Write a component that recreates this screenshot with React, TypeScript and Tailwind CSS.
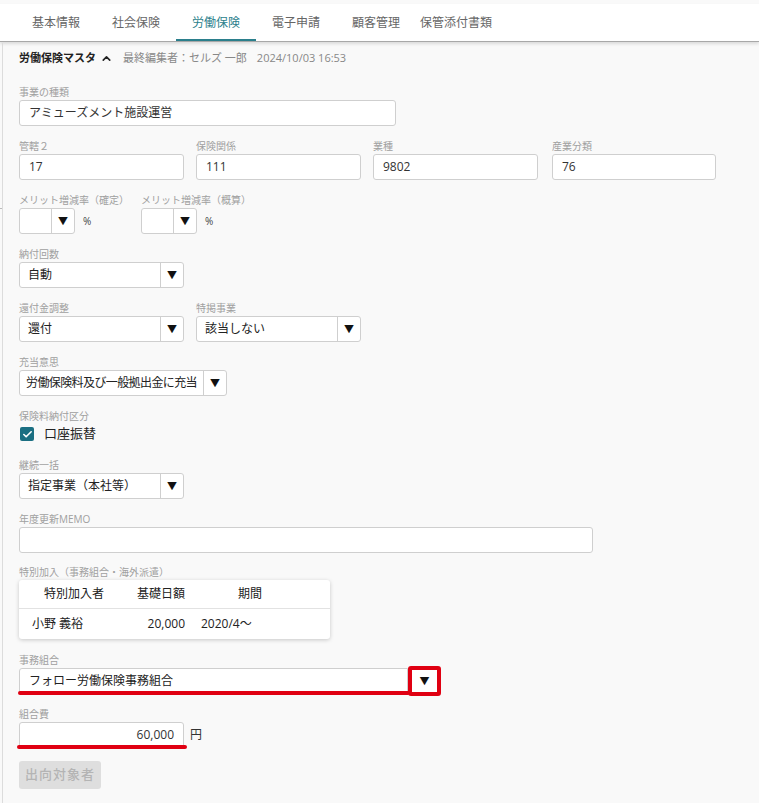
import { Check, ChevronUp } from 'lucide-react';

const FONT = { fontFamily: '"Open Sans", "Noto Sans CJK JP", sans-serif' };

const TABS = ['基本情報', '社会保険', '労働保険', '電子申請', '顧客管理', '保管添付書類'];

function Label({ children }: { children: React.ReactNode }) {
  return <div className="text-[10px] leading-[12px] h-[12px] text-[#a0a0a0] mb-[2px] whitespace-nowrap">{children}</div>;
}

function Input({ value = '', w, right }: { value?: string; w: string; right?: boolean }) {
  return (
    <div
      className={`${w} h-[26px] bg-white border border-[#cfcfcf] rounded-[3px] flex items-center px-[9px] text-[12px] text-[#333] ${right ? 'justify-end' : ''}`}
    >
      {value}
    </div>
  );
}

function Select({ value = '', w, tight }: { value?: string; w: string; tight?: boolean }) {
  return (
    <div className={`${w} h-[26px] bg-white border border-[#cfcfcf] rounded-[3px] flex items-stretch text-[12px] text-[#222]`}>
      <div className={`flex-1 flex items-center whitespace-nowrap overflow-hidden ${tight ? 'px-[6px] tracking-[-0.6px]' : 'px-[8px]'}`}>
        {value}
      </div>
      <div className="w-[23px] border-l border-[#cfcfcf] flex items-center justify-center text-[10px] text-[#111]">▼</div>
    </div>
  );
}

export default function App() {
  return (
    <div className="w-[759px] h-[803px] bg-[#f9f9f9] relative overflow-hidden" style={FONT}>
      {/* Tabs */}
      <div className="pt-[4px]">
        <div className="h-[38px] bg-white flex items-stretch border-b border-[#a8a8a8] shadow-[0_2px_3px_rgba(0,0,0,0.12)] pl-[16px]">
          {TABS.map((t) => {
            const active = t === '労働保険';
            return (
              <div
                key={t}
                className={`w-[80px] flex items-center justify-center text-[12px] ${active ? 'text-[#2b7f8c] border-b-2 border-[#2b7f8c]' : 'text-[#666]'}`}
              >
                <span className={active ? 'pt-[2px]' : ''}>{t}</span>
              </div>
            );
          })}
        </div>
      </div>

      {/* left rule */}
      <div className="absolute left-[2px] top-[43px] bottom-0 w-px bg-[#dcdcdc]" />
      <div className="absolute left-0 top-[208px] w-[2px] h-px bg-[#bbb]" />

      <div className="pl-[19px] pt-[9px]">
        {/* Header */}
        <div className="flex items-center h-[14px] text-[11px]">
          <span className="font-bold text-[#222]">労働保険マスタ</span>
          <ChevronUp className="w-[13px] h-[13px] ml-[4px] text-[#222]" strokeWidth={3} />
          <span className="ml-[10px] text-[#888]">最終編集者：セルズ 一郎</span>
          <span className="ml-[10px] text-[#888]">2024/10/03 16:53</span>
        </div>

        {/* 事業の種類 */}
        <div className="mt-[21px]">
          <Label>事業の種類</Label>
          <Input w="w-[377px]" value="アミューズメント施設運営" />
        </div>

        {/* Row 2 */}
        <div className="mt-[14px] flex gap-[12px]">
          <div>
            <Label>管轄２</Label>
            <Input w="w-[165px]" value="17" />
          </div>
          <div>
            <Label>保険関係</Label>
            <Input w="w-[165px]" value="111" />
          </div>
          <div>
            <Label>業種</Label>
            <Input w="w-[165px]" value="9802" />
          </div>
          <div className="ml-[2px]">
            <Label>産業分類</Label>
            <Input w="w-[164px]" value="76" />
          </div>
        </div>

        {/* Merit */}
        <div className="mt-[14px] flex">
          <div className="w-[122px]">
            <Label>メリット増減率（確定）</Label>
            <div className="flex items-center">
              <Select w="w-[56px]" />
              <span className="ml-[8px] text-[10px] text-[#444]">%</span>
            </div>
          </div>
          <div>
            <Label>メリット増減率（概算）</Label>
            <div className="flex items-center">
              <Select w="w-[56px]" />
              <span className="ml-[8px] text-[10px] text-[#444]">%</span>
            </div>
          </div>
        </div>

        {/* 納付回数 */}
        <div className="mt-[14px]">
          <Label>納付回数</Label>
          <Select w="w-[165px]" value="自動" />
        </div>

        <div className="mt-[14px] flex gap-[12px]">
          <div>
            <Label>還付金調整</Label>
            <Select w="w-[165px]" value="還付" />
          </div>
          <div>
            <Label>特掲事業</Label>
            <Select w="w-[165px]" value="該当しない" />
          </div>
        </div>

        <div className="mt-[14px]">
          <Label>充当意思</Label>
          <Select w="w-[208px]" value="労働保険料及び一般拠出金に充当" tight />
        </div>

        <div className="mt-[14px]">
          <Label>保険料納付区分</Label>
          <div className="flex items-center h-[20px]">
            <div className="w-[14px] h-[14px] ml-[1px] rounded-[2px] bg-[#1b6f82] flex items-center justify-center">
              <Check className="w-[11px] h-[11px] text-white" strokeWidth={3.5} />
            </div>
            <span className="ml-[10px] text-[13px] text-[#222]">口座振替</span>
          </div>
        </div>

        <div className="mt-[15px]">
          <Label>継続一括</Label>
          <Select w="w-[165px]" value="指定事業（本社等）" />
        </div>

        <div className="mt-[14px]">
          <Label>年度更新MEMO</Label>
          <Input w="w-[574px]" />
        </div>

        {/* 特別加入 */}
        <div className="mt-[13px]">
          <Label>特別加入（事務組合・海外派遣）</Label>
          <div className="w-[311px] bg-white rounded-[3px] shadow-[0_1px_4px_rgba(0,0,0,0.2)] text-[12px] text-[#222]">
            <div className="h-[29px] flex items-center border-b border-[#e2e2e2]">
              <div className="w-[108px] text-center pl-[2px]">特別加入者</div>
              <div className="w-[68px] text-center">基礎日額</div>
              <div className="w-[110px] text-center">期間</div>
            </div>
            <div className="h-[30px] flex items-center">
              <div className="w-[96px] pl-[13px]">小野 義裕</div>
              <div className="w-[70px] text-right">20,000</div>
              <div className="pl-[16px]">2020/4～</div>
            </div>
          </div>
        </div>

        {/* 事務組合 */}
        <div className="mt-[15px]">
          <Label>事務組合</Label>
          <div className="relative w-[422px]">
            <div className="h-[26px] flex items-stretch text-[12px] text-[#222]">
              <div className="flex-1 bg-white border border-[#cfcfcf] rounded-l-[3px] flex items-center px-[9px]">
                フォロー労働保険事務組合
              </div>
              <div className="w-[33px] -mt-[2px] h-[30px] bg-white border-[4px] border-[#e00012] rounded-[3px] flex items-center justify-center text-[10px] text-[#111]">
                ▼
              </div>
            </div>
            <div className="absolute left-[-1px] top-[23px] w-[392px] h-[4px] rounded-full bg-[#e00012]" />
          </div>
        </div>

        <div className="mt-[14px]">
          <Label>組合費</Label>
          <div className="relative flex items-center">
            <Input w="w-[165px]" value="60,000" right />
            <span className="ml-[6px] text-[12px] text-[#333]">円</span>
            <div className="absolute left-[-2px] top-[23px] w-[170px] h-[4px] rounded-full bg-[#e00012]" />
          </div>
        </div>

        <div className="mt-[13px]">
          <div className="w-[82px] h-[28px] rounded-[3px] bg-[#dedede] text-[#b4b4b4] text-[13px] font-medium tracking-[1px] flex items-center justify-center">
            出向対象者
          </div>
        </div>
      </div>
    </div>
  );
}
